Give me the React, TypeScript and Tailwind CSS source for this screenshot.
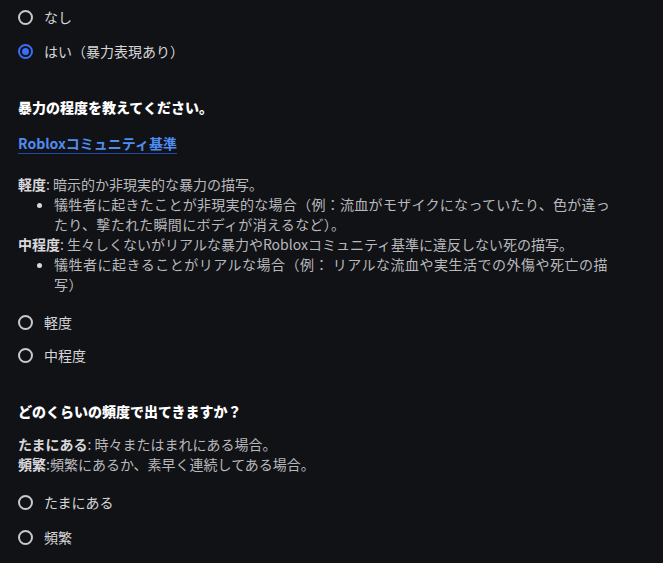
const FONT = '"Noto Sans CJK JP", "Noto Sans", sans-serif';

type RadioProps = { label: string; checked?: boolean };

function Radio({ label, checked }: RadioProps) {
  return (
    <label className="flex h-5 items-center gap-[11px] text-[14px] text-[#d6d6d8]">
      <span
        className={
          checked
            ? 'flex h-[15px] w-[15px] items-center justify-center rounded-full border-2 border-[#3b6df5]'
            : 'flex h-[15px] w-[15px] items-center justify-center rounded-full border-2 border-[#c9c9cc]'
        }
      >
        {checked && <span className="h-[7px] w-[7px] rounded-full bg-[#3b6df5]" />}
      </span>
      <span>{label}</span>
    </label>
  );
}

export default function App() {
  return (
    <div
      className="min-h-[563px] w-full bg-[#111216] pl-[18px] pt-[7px]"
      style={{ fontFamily: FONT }}
    >
      <div className="flex w-[596px] flex-col">
        <div className="flex flex-col gap-[14px]">
          <Radio label="なし" />
          <Radio label="はい（暴力表現あり）" checked />
        </div>

        <h3 className="mt-[36px] h-5 text-[14px] font-black leading-5 text-white">
          暴力の程度を教えてください。
        </h3>

        <a className="mt-[16px] w-fit border-b border-[#2347a8] text-[14px] font-bold leading-5 text-[#4f8cf0]">
          Robloxコミュニティ基準
        </a>

        <div className="mt-[20px] text-[14px] leading-5 text-[#b9b9bc]">
          <p>
            <span className="font-bold text-[#d9d9dc]">軽度</span>: 暗示的か非現実的な暴力の描写。
          </p>
          <ul className="list-disc pl-[36px] tracking-[0.3px] marker:text-[#d9d9dc]">
            <li>
              犠牲者に起きたことが非現実的な場合（例：流血がモザイクになっていたり、色が違ったり、撃たれた瞬間にボディが消えるなど）。
            </li>
          </ul>
          <p>
            <span className="font-bold text-[#d9d9dc]">中程度</span>: 生々しくないがリアルな暴力やRobloxコミュニティ基準に違反しない死の描写。
          </p>
          <ul className="list-disc pl-[36px] tracking-[0.5px] marker:text-[#d9d9dc]">
            <li>犠牲者に起きることがリアルな場合（例： リアルな流血や実生活での外傷や死亡の描写）</li>
          </ul>
        </div>

        <div className="mt-[18px] flex flex-col gap-[13px]">
          <Radio label="軽度" />
          <Radio label="中程度" />
        </div>

        <h3 className="mt-[36px] h-5 text-[14px] font-black leading-5 text-white">
          どのくらいの頻度で出てきますか？
        </h3>

        <div className="mt-[13px] text-[14px] leading-5 text-[#b9b9bc]">
          <p>
            <span className="font-bold text-[#d9d9dc]">たまにある</span>: 時々またはまれにある場合。
          </p>
          <p>
            <span className="font-bold text-[#d9d9dc]">頻繁</span>:頻繁にあるか、素早く連続してある場合。
          </p>
        </div>

        <div className="mt-[18px] flex flex-col gap-[15px]">
          <Radio label="たまにある" />
          <Radio label="頻繁" />
        </div>
      </div>
    </div>
  );
}
